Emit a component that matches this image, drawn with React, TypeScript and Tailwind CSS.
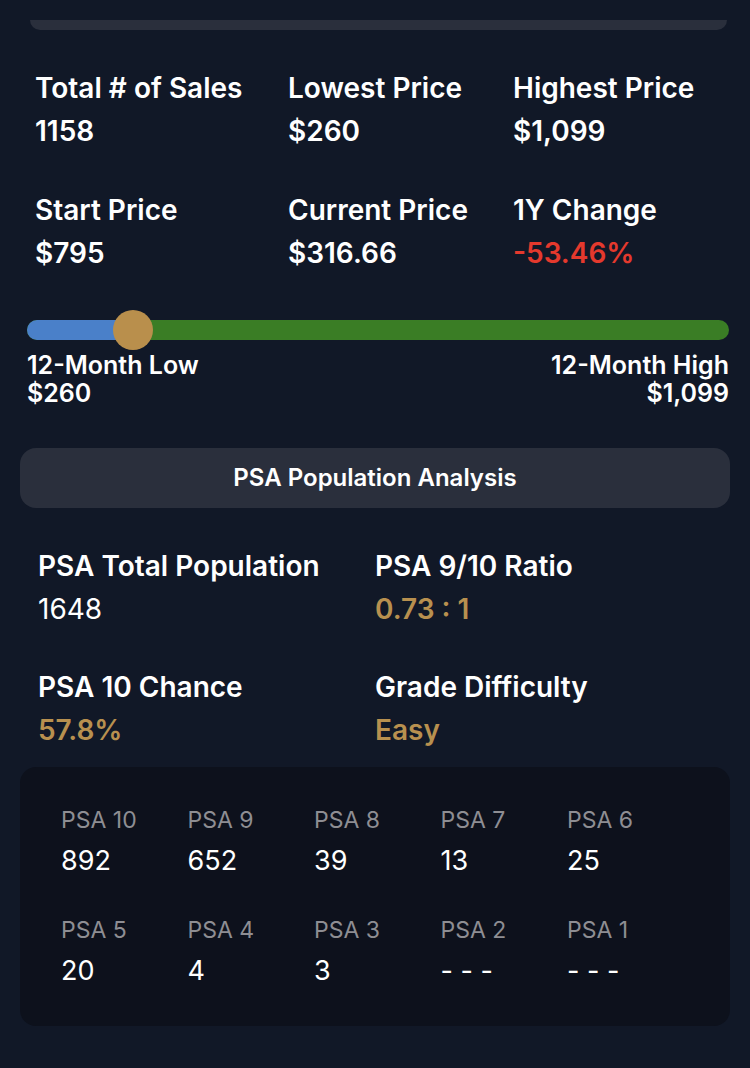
import React from "react";

const font = { fontFamily: "Inter, 'Noto Sans', sans-serif" };

function Stat({ label, value, valueClass }: { label: string; value: string; valueClass?: string }) {
  return (
    <div className="flex flex-col">
      <div className="h-[32px] leading-[32px] text-[28px] font-semibold text-white whitespace-nowrap">{label}</div>
      <div className={"mt-[11px] h-[32px] leading-[32px] text-[28px] font-semibold whitespace-nowrap " + (valueClass ?? "text-white")}>{value}</div>
    </div>
  );
}

function PopStat({ label, value, valueClass }: { label: string; value: string; valueClass: string }) {
  return (
    <div className="flex flex-col">
      <div className="h-[32px] leading-[32px] text-[28px] font-semibold text-white whitespace-nowrap">{label}</div>
      <div className={"mt-[11px] h-[32px] leading-[32px] text-[28px] whitespace-nowrap " + valueClass}>{value}</div>
    </div>
  );
}

const grades: { label: string; value: string }[] = [
  { label: "PSA 10", value: "892" },
  { label: "PSA 9", value: "652" },
  { label: "PSA 8", value: "39" },
  { label: "PSA 7", value: "13" },
  { label: "PSA 6", value: "25" },
  { label: "PSA 5", value: "20" },
  { label: "PSA 4", value: "4" },
  { label: "PSA 3", value: "3" },
  { label: "PSA 2", value: "- - -" },
  { label: "PSA 1", value: "- - -" },
];

export default function App() {
  return (
    <div className="w-[750px] h-[1068px] bg-[#111827] overflow-hidden flex flex-col" style={font}>
      <div className="mt-[20px] mx-[30px] mr-[23px] h-[10px] bg-[#2a2f3c] rounded-b-[18px]" />

      <div className="mt-[42px] pl-[35px] grid grid-cols-[253px_225px_1fr] gap-y-[47px]">
        <Stat label="Total # of Sales" value="1158" />
        <Stat label="Lowest Price" value="$260" />
        <Stat label="Highest Price" value="$1,099" />
        <Stat label="Start Price" value="$795" />
        <Stat label="Current Price" value="$316.66" />
        <Stat label="1Y Change" value="-53.46%" valueClass="text-[#e5392d]" />
      </div>

      <div className="mt-[51px] ml-[27px] mr-[21px]">
        <div className="relative h-[20px] rounded-full bg-[#3a7d25]">
          <div className="absolute left-0 top-0 h-[20px] w-[110px] rounded-l-full bg-[#4a80c9]" />
          <div className="absolute left-[86px] top-[-10px] w-[40px] h-[40px] rounded-full bg-[#b98f4c]" />
        </div>
        <div className="mt-[11px] flex justify-between text-white text-[25px] font-semibold leading-[28px]">
          <div className="flex flex-col">
            <span>12-Month Low</span>
            <span>$260</span>
          </div>
          <div className="flex flex-col items-end">
            <span>12-Month High</span>
            <span>$1,099</span>
          </div>
        </div>
      </div>

      <div className="mt-[41px] mx-[20px] h-[60px] rounded-[16px] bg-[#2a2f3c] flex items-center justify-center text-white text-[24px] font-semibold">
        PSA Population Analysis
      </div>

      <div className="mt-[42px] pl-[38px] grid grid-cols-[337px_1fr] gap-y-[46px]">
        <PopStat label="PSA Total Population" value="1648" valueClass="text-white font-normal" />
        <PopStat label="PSA 9/10 Ratio" value="0.73 : 1" valueClass="text-[#b8904f] font-semibold" />
        <PopStat label="PSA 10 Chance" value="57.8%" valueClass="text-[#b8904f] font-semibold" />
        <PopStat label="Grade Difficulty" value="Easy" valueClass="text-[#b8904f] font-semibold" />
      </div>

      <div className="mt-[21px] mx-[20px] h-[259px] rounded-[16px] bg-[#0d111c] pt-[39px] pl-[41px]">
        <div className="grid grid-cols-[repeat(5,126.5px)] gap-y-[39px]">
          {grades.map((g) => (
            <div key={g.label} className="flex flex-col">
              <div className="h-[28px] leading-[28px] text-[23px] text-[#8e8e93] whitespace-nowrap">{g.label}</div>
              <div className="mt-[11px] h-[32px] leading-[32px] text-[27px] text-white whitespace-nowrap">{g.value}</div>
            </div>
          ))}
        </div>
      </div>
    </div>
  );
}
